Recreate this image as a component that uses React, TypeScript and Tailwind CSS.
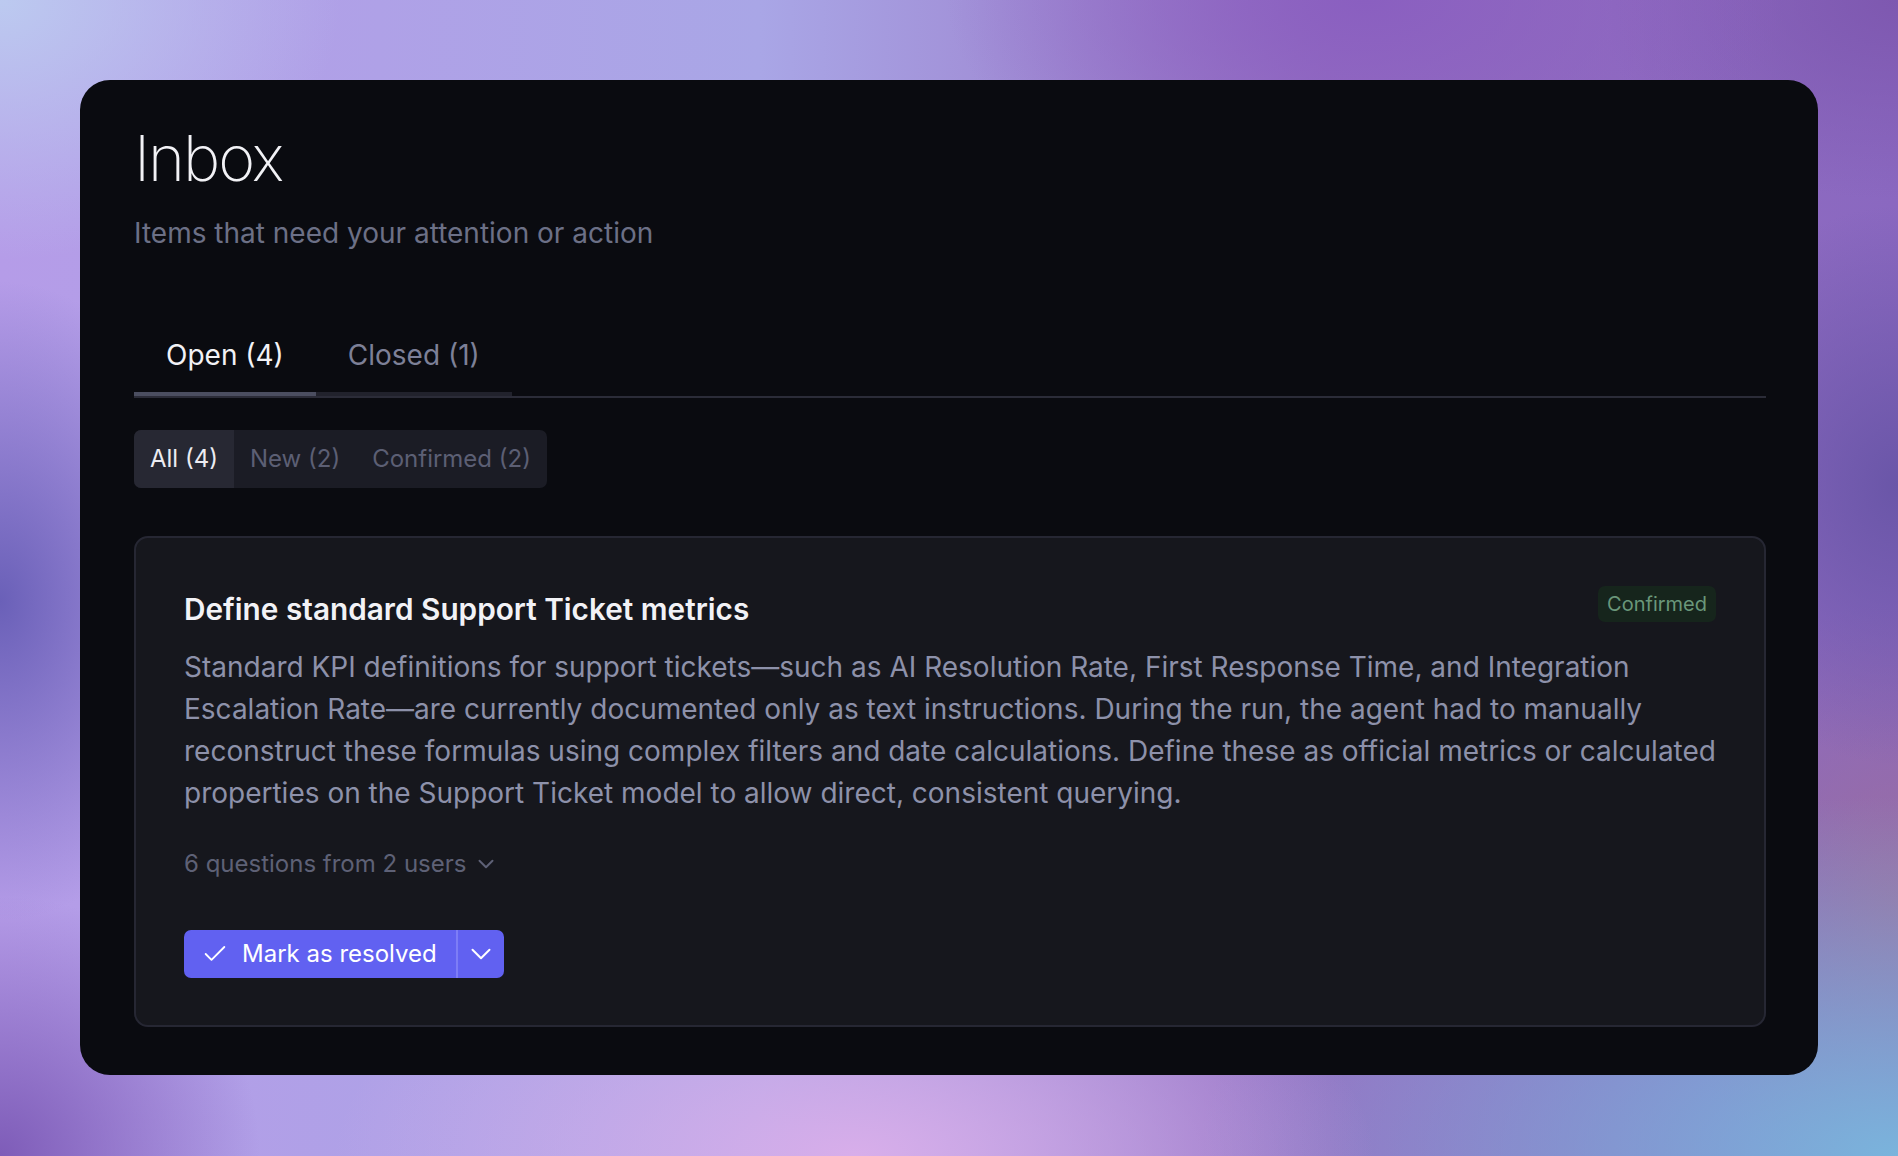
import { Check, ChevronDown } from 'lucide-react';

const filters = [
  { label: 'All (4)', active: true },
  { label: 'New (2)', active: false },
  { label: 'Confirmed (2)', active: false },
];

const tabs = [
  { label: 'Open (4)', active: true },
  { label: 'Closed (1)', active: false },
];

const bodyLines = [
  'Standard KPI definitions for support tickets—such as AI Resolution Rate, First Response Time, and Integration',
  'Escalation Rate—are currently documented only as text instructions. During the run, the agent had to manually',
  'reconstruct these formulas using complex filters and date calculations. Define these as official metrics or calculated',
  'properties on the Support Ticket model to allow direct, consistent querying.',
];

export default function App() {
  return (
    <div className="min-h-screen w-full p-[80px] font-[Inter,sans-serif] bg-[#a38ad8] bg-[image:radial-gradient(ellipse_340px_260px_at_0%_0%,#bccaf0,transparent),radial-gradient(ellipse_520px_240px_at_45%_100%,#d8aeea,transparent),radial-gradient(ellipse_700px_360px_at_100%_100%,#7ab4dc,transparent),radial-gradient(ellipse_220px_320px_at_0%_52%,#6a60b8,transparent),radial-gradient(ellipse_220px_280px_at_100%_42%,#6a56a8,transparent),radial-gradient(ellipse_420px_220px_at_72%_0%,#8a5fc0,transparent),radial-gradient(ellipse_300px_200px_at_100%_0%,#7e58b0,transparent),radial-gradient(ellipse_260px_260px_at_0%_100%,#7e5cb8,transparent),radial-gradient(ellipse_240px_300px_at_100%_78%,#9a6ea0,transparent),linear-gradient(90deg,#b59ce8,#a9a6e6_40%,#9670c2_70%,#8a68c0)]">
      <div className="rounded-[30px] bg-[#0a0b10] pl-[54px] pr-[52px] pt-[43px] pb-[48px]">
        <h1 className="text-[63px] leading-[70px] font-extralight text-[#f2f2f6] tracking-[-2px]">Inbox</h1>
        <p className="mt-[19px] text-[28px] leading-[42px] text-[#6c7086]">
          Items that need your attention or action
        </p>

        <div className="mt-[65px] border-b-2 border-[#2b2c38]">
          <div className="inline-flex">
            {tabs.map(tab => (
              <div
                key={tab.label}
                className={`px-[32px] pt-[15px] pb-[16px] border-b-4 text-[28px] leading-[42px] ${tab.active ? 'border-[#4b4e60] text-[#f2f2f6]' : 'border-[#21222c] text-[#7d8097]'}`}
              >
                {tab.label}
              </div>
            ))}
          </div>
        </div>

        <div className="mt-[32px] inline-flex h-[58px] rounded-[7px] bg-[#1b1c25] overflow-hidden">
          {filters.map(f => (
            <div
              key={f.label}
              className={`flex items-center px-[16px] text-[24px] ${f.active ? 'bg-[#272833] text-[#ececf2]' : 'text-[#5c5f74]'}`}
            >
              {f.label}
            </div>
          ))}
        </div>

        <div className="mt-[48px] rounded-[14px] border-2 border-[#262733] bg-[#16171d] px-[48px] pt-[50px] pb-[47px]">
          <div className="flex items-start justify-between">
            <h2 className="text-[29.75px] leading-[42px] font-semibold text-[#f2f2f6]">
              Define standard Support Ticket metrics
            </h2>
            <span className="-mt-[2px] h-[36px] px-[9px] rounded-[7px] bg-[#16251c] text-[20px] leading-[36px] text-[#6a977a]">
              Confirmed
            </span>
          </div>

          <div className="mt-[16px] text-[28px] leading-[42px] text-[#8d91aa]">
            {bodyLines.map(line => (
              <div key={line} className="whitespace-nowrap">{line}</div>
            ))}
          </div>

          <div className="mt-[32px] flex items-center gap-[7px] text-[24px] leading-[35px] text-[#5e6176]">
            <span>6 questions from 2 users</span>
            <ChevronDown size={26} strokeWidth={1.8} />
          </div>

          <div className="mt-[49px] inline-flex h-[48px] rounded-[7px] bg-[#6161f1] text-white">
            <div className="flex items-center gap-[13px] pl-[17px] pr-[19px]">
              <Check size={28} strokeWidth={1.6} />
              <span className="text-[24px]">Mark as resolved</span>
            </div>
            <div className="flex items-center border-l-2 border-[#7d7df6] px-[6px]">
              <ChevronDown size={34} strokeWidth={1.4} />
            </div>
          </div>
        </div>
      </div>
    </div>
  );
}
